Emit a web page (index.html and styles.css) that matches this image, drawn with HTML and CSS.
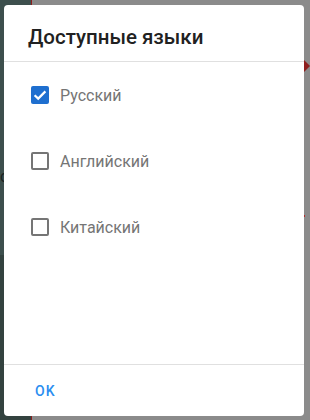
FILE: index.html
```html
<!DOCTYPE html>
<html lang="ru">
<head>
    <meta charset="UTF-8">
    <meta name="viewport" content="width=device-width, initial-scale=1.0">
    <title>Доступные языки</title>
    <link rel="stylesheet" href="styles.css">
</head>
<body>

    <!-- Page behind the dialog -->
    <div class="page">
        <div class="sidebar">
            <span class="sidebar-glyph">c</span>
            <div class="sidebar-foot"></div>
        </div>
        <div class="main">
            <span class="marker"></span>
            <span class="dot"></span>
        </div>
    </div>

    <!-- Dialog -->
    <div class="dialog">
        <div class="dialog-title">Доступные языки</div>

        <div class="dialog-content">
            <label class="lang-row">
                <span class="checkbox checked">
                    <svg viewBox="0 0 18 18" width="18" height="18">
                        <path d="M3.6 9.2 L7.2 12.6 L14.4 5.4" fill="none" stroke="#fff" stroke-width="2.2"/>
                    </svg>
                </span>
                <span class="lang-name">Русский</span>
            </label>
            <label class="lang-row">
                <span class="checkbox"></span>
                <span class="lang-name">Английский</span>
            </label>
            <label class="lang-row">
                <span class="checkbox"></span>
                <span class="lang-name">Китайский</span>
            </label>
        </div>

        <div class="dialog-actions">
            <span class="ok-button">OK</span>
        </div>
    </div>

</body>
</html>
```

FILE: styles.css
```css
body {
    margin: 0;
    width: 310px;
    height: 420px;
    overflow: hidden;
    font-family: Roboto, "Noto Sans", sans-serif;
    position: relative;
}

/* Background page (dimmed) */
.page {
    display: flex;
    height: 100%;
}

.sidebar {
    width: 31px;
    background-color: #3d4f4d;
    border-right: 1px solid #8c1c1c;
    display: flex;
    flex-direction: column;
    justify-content: space-between;
}

.sidebar-glyph {
    margin-top: 167px;
    margin-left: 0;
    font-size: 16px;
    color: #1a2222;
}

.sidebar-foot {
    height: 165px;
    background-color: #33423f;
}

.main {
    flex: 1;
    background-color: #8b8b8b;
    position: relative;
}

.marker {
    position: absolute;
    right: 0;
    top: 60px;
    width: 0;
    height: 0;
    border-top: 6px solid transparent;
    border-bottom: 6px solid transparent;
    border-left: 6px solid #8e1d1d;
}

.dot {
    position: absolute;
    right: 5px;
    top: 215px;
    width: 1px;
    height: 2px;
    background-color: #b02a2a;
}

/* Dialog */
.dialog {
    position: absolute;
    left: 4px;
    top: 5px;
    width: 300px;
    height: 411px;
    background-color: #fff;
    border-radius: 4px;
    display: flex;
    flex-direction: column;
}

.dialog-title {
    height: 57px;
    box-sizing: border-box;
    padding: 20px 24px 0;
    font-size: 20.5px;
    font-weight: 500;
    color: #212121;
    border-bottom: 1px solid #e0e0e0;
}

.dialog-content {
    flex: 1;
    padding: 0 24px;
}

.lang-row {
    display: flex;
    align-items: center;
    height: 66px;
}

.checkbox {
    width: 18px;
    height: 18px;
    margin: 0 8px 0 3px;
    box-sizing: border-box;
    border: 2px solid #757575;
    border-radius: 2px;
    display: flex;
}

.checkbox.checked {
    border: none;
    background-color: #1f6fcf;
}

.lang-name {
    margin-left: 3px;
    font-size: 16px;
    color: #757575;
}

.dialog-actions {
    height: 51px;
    border-top: 1px solid #e0e0e0;
    display: flex;
    align-items: center;
    padding: 0 31px;
}

.ok-button {
    font-size: 14px;
    font-weight: 500;
    letter-spacing: 1.2px;
    color: #2b8ef0;
}
```
